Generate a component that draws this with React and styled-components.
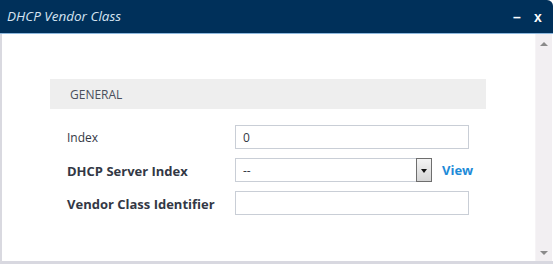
import React from 'react';
import styled, { createGlobalStyle } from 'styled-components';

const GlobalStyle = createGlobalStyle`
  html, body {
    margin: 0;
    padding: 0;
    background: #ffffff;
  }
  body {
    font-family: "Open Sans", "DejaVu Sans", sans-serif;
  }
`;

const Dialog = styled.div`
  width: 553px;
  height: 264px;
  display: flex;
  flex-direction: column;
  box-sizing: border-box;
  overflow: hidden;
`;

const TitleBar = styled.div`
  height: 33px;
  background: #00305a;
  border-top-right-radius: 6px;
  border-bottom: 1px solid #8db8de;
  display: flex;
  align-items: center;
  padding: 0 0 0 7px;
  flex-shrink: 0;
`;

const Title = styled.div`
  flex: 1;
  font-style: italic;
  font-size: 13.5px;
  color: #d6e4f2;
  margin-top: -2px;
`;

const Control = styled.button`
  background: none;
  border: none;
  padding: 0;
  width: 20px;
  color: #ffffff;
  font-family: "Liberation Sans", sans-serif;
  font-weight: bold;
  font-size: 14px;
  margin-right: ${(p) => p.$gap || 0}px;
  cursor: pointer;
`;

const Body = styled.div`
  flex: 1;
  display: flex;
  min-height: 0;
  border-left: 2px solid #d9d9e0;
  border-bottom: 3px solid #d8d8e0;
`;

const Content = styled.div`
  flex: 1;
  padding: 45px 0 0 48px;
`;

const Scrollbar = styled.div`
  width: 16px;
  margin-right: 1px;
  background: #f2eff2;
  border-left: 1px solid #f6f4f6;
  display: flex;
  flex-direction: column;
  justify-content: space-between;
  align-items: center;
  padding: 8px 0 6px;
`;

const Arrow = styled.div`
  width: 0;
  height: 0;
  border-left: 4px solid transparent;
  border-right: 4px solid transparent;
  ${(p) =>
    p.$down
      ? 'border-top: 4px solid #8a8a8a;'
      : 'border-bottom: 4px solid #8a8a8a;'}
`;

const Section = styled.div`
  width: 436px;
`;

const SectionHeader = styled.div`
  height: 30px;
  background: #eeeeee;
  display: flex;
  align-items: center;
  padding-left: 20px;
  font-size: 12px;
  color: #4a4f5c;
  margin-bottom: 16px;
`;

const Row = styled.div`
  display: flex;
  align-items: center;
  height: 24px;
  margin-bottom: 9px;
  padding-left: 17px;
`;

const Label = styled.div`
  width: 168px;
  font-size: ${(p) => (p.$bold ? 13 : 12)}px;
  font-weight: ${(p) => (p.$bold ? 700 : 400)};
  color: #333845;
  margin-top: 1px;
`;

const TextInput = styled.div`
  box-sizing: border-box;
  width: ${(p) => p.$width || 234}px;
  height: 24px;
  border: 1px solid #c9ced6;
  background: #ffffff;
  font-size: 12px;
  color: #333845;
  padding-left: 7px;
  display: flex;
  align-items: center;
`;

const Select = styled(TextInput)`
  padding-right: 0;
  justify-content: space-between;
`;

const DropButton = styled.div`
  box-sizing: border-box;
  width: 16px;
  height: 24px;
  border: 1px solid #6e6e6e;
  background: linear-gradient(#f4f4f4, #d6d6d6);
  display: flex;
  align-items: center;
  justify-content: center;
  margin-right: -1px;
`;

const SmallArrow = styled.div`
  width: 0;
  height: 0;
  border-left: 3px solid transparent;
  border-right: 3px solid transparent;
  border-top: 4px solid #111;
  margin-top: 1px;
`;

const ViewLink = styled.a`
  margin-left: 10px;
  font-size: 13px;
  font-weight: 700;
  color: #1e8bd8;
  text-decoration: none;
`;

export default function App() {
  return (
    <>
      <GlobalStyle />
      <Dialog>
        <TitleBar>
          <Title>DHCP Vendor Class</Title>
          <Control $gap={1}>–</Control>
          <Control $gap={5}>x</Control>
        </TitleBar>
        <Body>
          <Content>
            <Section>
              <SectionHeader>GENERAL</SectionHeader>
              <Row>
                <Label>Index</Label>
                <TextInput>0</TextInput>
              </Row>
              <Row>
                <Label $bold>DHCP Server Index</Label>
                <Select $width={197}>
                  --
                  <DropButton>
                    <SmallArrow />
                  </DropButton>
                </Select>
                <ViewLink>View</ViewLink>
              </Row>
              <Row>
                <Label $bold>Vendor Class Identifier</Label>
                <TextInput />
              </Row>
            </Section>
          </Content>
          <Scrollbar>
            <Arrow />
            <Arrow $down />
          </Scrollbar>
        </Body>
      </Dialog>
    </>
  );
}
